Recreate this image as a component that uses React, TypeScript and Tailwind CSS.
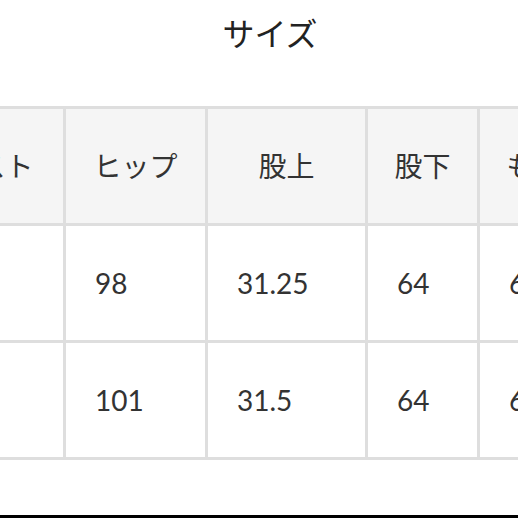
import React from "react";

const cols = [174, 142, 160, 112, 112];
const header = ["ウエスト", "ヒップ", "股上", "股下", "もも"];
const rows = [
  ["70", "98", "31.25", "64", "62"],
  ["74", "101", "31.5", "64", "63"],
];

export default function App() {
  return (
    <div
      className="w-[518px] h-[518px] bg-white overflow-hidden flex flex-col text-[#333333]"
      style={{ fontFamily: 'Lato, "Noto Sans CJK JP", sans-serif' }}
    >
      <div className="pl-[22px] pt-[18px] text-center text-[32px] leading-none text-[#222222]">
        サイズ
      </div>
      <div className="mt-[56px] ml-[-108px] w-[700px] border-t-[3px] border-[#dedede] flex flex-col">
        <div className="flex h-[117px] bg-[#f5f5f5]">
          {header.map((h, i) => (
            <div
              key={i}
              style={{ width: cols[i] }}
              className="shrink-0 h-full border-r-[3px] border-b-[3px] border-[#dedede] flex items-center justify-center text-[28px] leading-none"
            >
              {h}
            </div>
          ))}
        </div>
        {rows.map((r, ri) => (
          <div key={ri} className="flex h-[117px] bg-white">
            {r.map((v, i) => (
              <div
                key={i}
                style={{ width: cols[i] }}
                className="shrink-0 h-full border-r-[3px] border-b-[3px] border-[#dedede] flex items-center pl-[29px] text-[28px] leading-none"
              >
                {v}
              </div>
            ))}
          </div>
        ))}
      </div>
      <div className="mt-auto h-[3px] bg-black" />
    </div>
  );
}
